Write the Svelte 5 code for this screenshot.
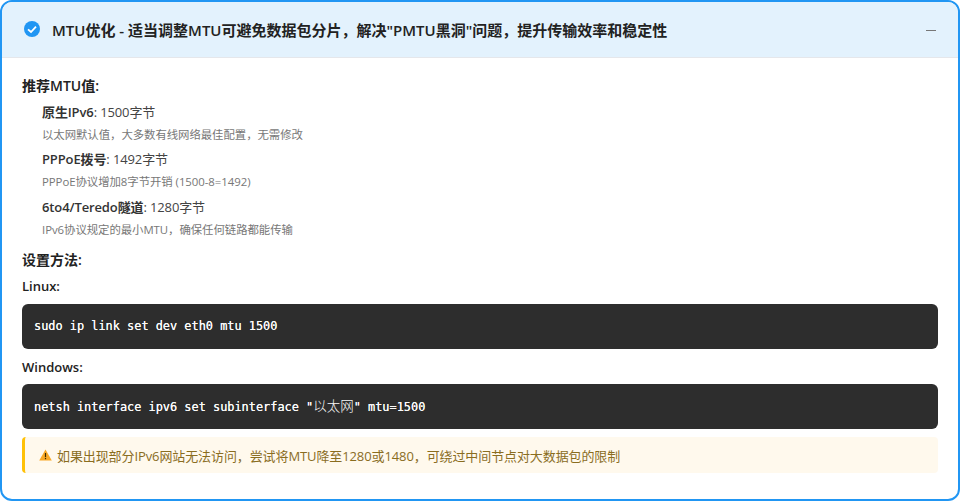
<script>
  const values = [
    { name: '原生IPv6', value: '1500字节', note: '以太网默认值，大多数有线网络最佳配置，无需修改' },
    { name: 'PPPoE拨号', value: '1492字节', note: 'PPPoE协议增加8字节开销 (1500-8=1492)' },
    { name: '6to4/Teredo隧道', value: '1280字节', note: 'IPv6协议规定的最小MTU，确保任何链路都能传输' }
  ];
</script>

<div class="card">
  <header class="head">
    <div class="title">
      <svg class="check" width="16" height="16" viewBox="0 0 16 16" aria-hidden="true">
        <circle cx="8" cy="8" r="8" fill="#2196f3" />
        <path d="M4 8.3 L7 11 L12 5.6" fill="none" stroke="#fff" stroke-width="1.8" />
      </svg>
      <span class="title-text">MTU优化 - 适当调整MTU可避免数据包分片，解决"PMTU黑洞"问题，提升传输效率和稳定性</span>
    </div>
    <span class="toggle"></span>
  </header>
  <div class="body">
    <p class="section">推荐MTU值:</p>
    <ul class="list">
      {#each values as v}
        <li>
          <div class="row"><b>{v.name}</b>: {v.value}</div>
          <div class="note">{v.note}</div>
        </li>
      {/each}
    </ul>
    <p class="section method">设置方法:</p>
    <p class="os">Linux:</p>
    <pre class="code">sudo ip link set dev eth0 mtu 1500</pre>
    <p class="os win">Windows:</p>
    <pre class="code">netsh interface ipv6 set subinterface "<span class="cjk">以太网</span>" mtu=1500</pre>
    <div class="warn">
      <svg width="13" height="12" viewBox="0 0 13 12" aria-hidden="true">
        <path d="M6.5 0.5 L12.8 11.5 L0.2 11.5 Z" fill="#f9a825" />
        <rect x="5.9" y="4" width="1.2" height="4.2" fill="#3a2a00" />
        <rect x="5.9" y="9" width="1.2" height="1.2" fill="#3a2a00" />
      </svg>
      <span>如果出现部分IPv6网站无法访问，尝试将MTU降至1280或1480，可绕过中间节点对大数据包的限制</span>
    </div>
  </div>
</div>

<style>
  :global(body) {
    margin: 0;
    background: #fff;
  }
  .card {
    box-sizing: border-box;
    width: 960px;
    height: 501px;
    border: 2px solid #2196f3;
    border-radius: 12px;
    overflow: hidden;
    background: #fff;
    font-family: "Open Sans", "Noto Sans CJK SC", sans-serif;
    color: #333;
  }
  .head {
    box-sizing: border-box;
    height: 56px;
    display: flex;
    align-items: center;
    justify-content: space-between;
    padding: 0 20px 1px 22px;
    background: #e3f2fd;
    border-bottom: 1px solid #e5e7eb;
  }
  .title {
    display: flex;
    align-items: center;
    gap: 12px;
  }
  .check {
    flex: none;
  }
  .title-text {
    font-size: 15px;
    font-weight: 600;
    color: #222;
  }
  .toggle {
    width: 10px;
    height: 1px;
    margin-right: 2px;
    margin-top: 3px;
    background: #777;
  }
  .body {
    padding: 18px 20px 0;
  }
  p {
    margin: 0;
  }
  .section,
  .os {
    font-size: 14px;
    font-weight: 600;
    line-height: 20px;
    color: #222;
  }
  .os {
    font-size: 13px;
    margin-top: 6px;
  }
  .list {
    list-style: none;
    margin: 6px 0 0;
    padding: 0 0 0 20px;
  }
  .list li {
    margin-bottom: 5px;
  }
  .list li:nth-child(2) {
    margin-bottom: 6px;
  }
  .row {
    font-size: 13px;
    letter-spacing: -0.12px;
    line-height: 21px;
    margin-bottom: 3px;
    color: #444;
  }
  .row b {
    font-weight: 600;
    color: #333;
  }
  .note {
    font-size: 11.4px;
    letter-spacing: -0.05px;
    line-height: 18px;
    color: #777;
  }
  .method {
    margin-top: 11px;
  }
  .os.win {
    margin-top: 8px;
  }
  .code {
    box-sizing: border-box;
    height: 45px;
    margin: 8px 0 0;
    padding: 0 12px;
    line-height: 45px;
    background: #2d2d2d;
    border-radius: 6px;
    color: #fafafa;
    text-shadow: 0 0 0.4px #fff;
    font-family: "DejaVu Sans Mono", "Noto Sans CJK SC", monospace;
    font-size: 11.9px;
  }
  .cjk {
    font-size: 13.5px;
    text-shadow: none;
    font-weight: 300;
  }
  .os.win + .code {
    margin-top: 7px;
  }
  .warn {
    box-sizing: border-box;
    height: 36px;
    margin-top: 8px;
    display: flex;
    align-items: center;
    gap: 5px;
    padding-left: 14px;
    background: #fff9ed;
    border-left: 3px solid #ffc107;
    border-radius: 4px;
    font-size: 13px;
    letter-spacing: -0.1px;
    color: #8a6d1f;
  }
</style>
